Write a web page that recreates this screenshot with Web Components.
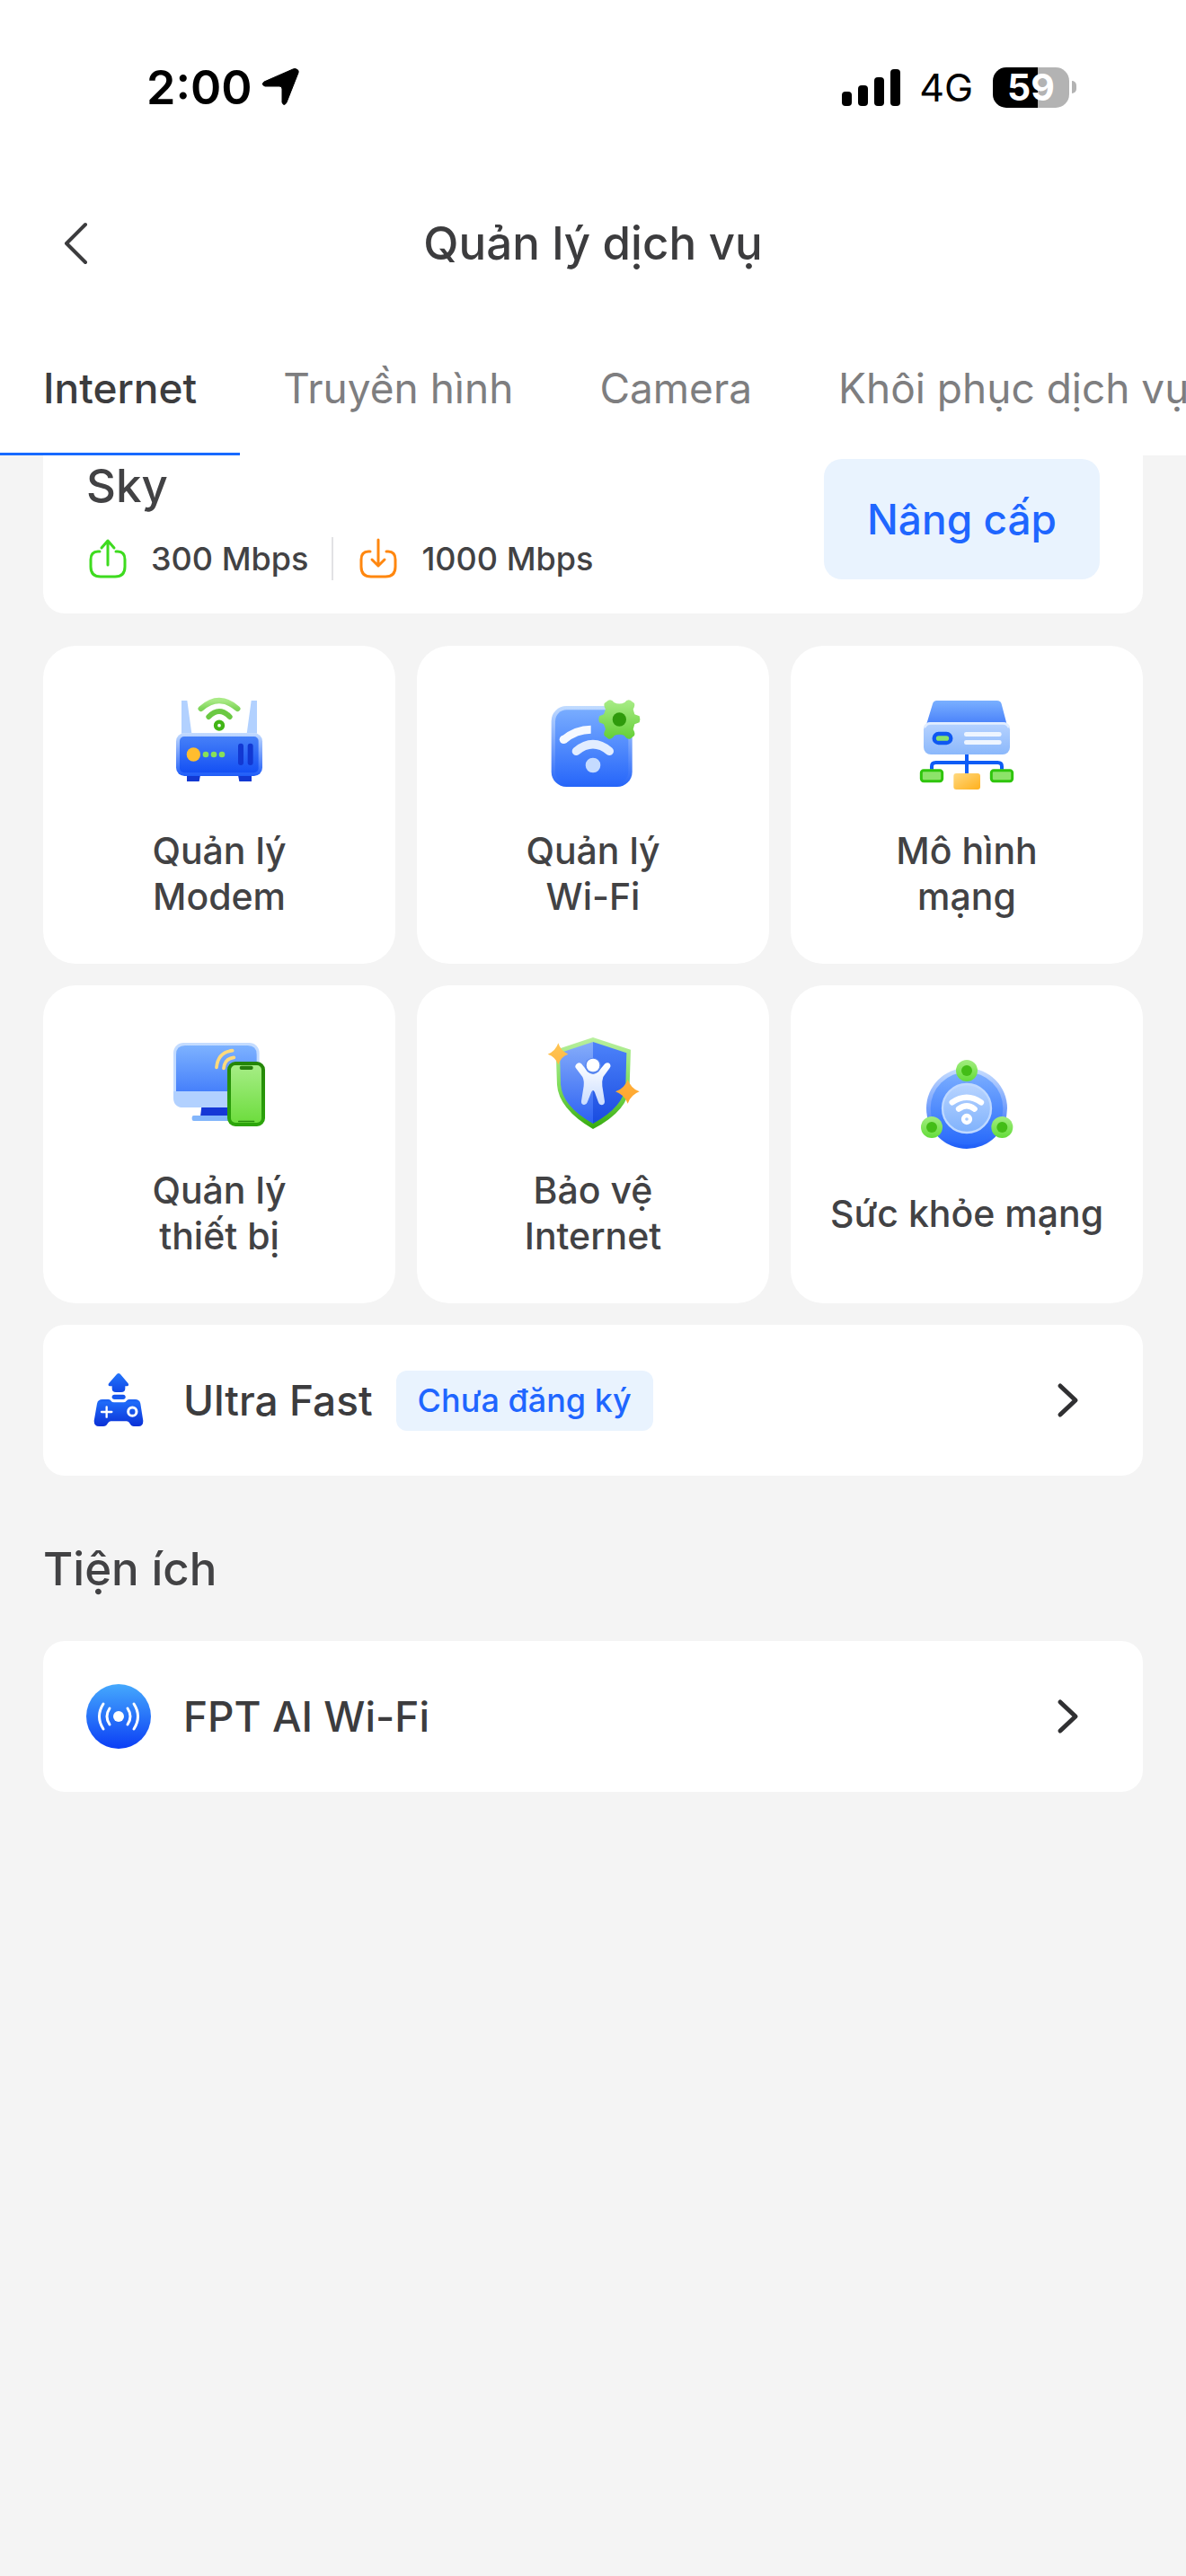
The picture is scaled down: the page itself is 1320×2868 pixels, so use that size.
<!DOCTYPE html>
<html lang="vi">
<head>
<meta charset="UTF-8">
<meta name="viewport" content="width=device-width, initial-scale=1">
<title>Quản lý dịch vụ</title>
<style>
  :root {
    --text: #424244;
    --muted: #7e7e80;
    --blue: #1f66ff;
    --blue-soft: #e9f3fe;
    --fs-title: 51px;
    --fs-body: 46px;
    --fs-tile: 41px;
    --fs-small: 36px;
  }

  body {
    margin: 0;
    min-height: 100vh;
    background: #f4f4f4;
    color: var(--text);
    font-family: Inter, "Noto Sans", sans-serif;
    font-weight: 500;
  }
</style>
</head>
<body>
<service-page></service-page>

<script>
/** Shared base: puts the markup into an open shadow root */
class BaseElement extends HTMLElement {
  constructor() {
    super();
    this.attachShadow({ mode: 'open' });
  }

  connectedCallback() {
    this.shadowRoot.innerHTML = this.render();
  }
}

const ICONS = {
  modem: {
    box: '72 69 360 360',
    art: `
      <defs>
        <linearGradient id="body" x1="0" y1="0" x2="0" y2="1"><stop offset="0" stop-color="#4680f8"/><stop offset="1" stop-color="#1450f4"/></linearGradient>
        <linearGradient id="rim" x1="0" y1="0" x2="0" y2="1"><stop offset="0" stop-color="#c4dcff"/><stop offset="1" stop-color="#1e5cf8"/></linearGradient>
        <linearGradient id="wave" x1="0" y1="0" x2="0" y2="1"><stop offset="0" stop-color="#a9ea86"/><stop offset="1" stop-color="#7ed458"/></linearGradient>
      </defs>
      <path d="M126 117h19l15 110h-34zM359 117h19v110h-34z" fill="#b2d1ff"/>
      <path d="M144 366h45l-4 21h-41zM315 366h45v21h-41z" fill="#1238d2"/>
      <rect x="108" y="225" width="288" height="144" rx="28" fill="url(#rim)"/>
      <rect x="120" y="237" width="263" height="121" rx="15" fill="url(#body)"/>
      <path d="M191 144q61-54 122 0" fill="none" stroke="url(#wave)" stroke-width="19" stroke-linecap="round"/>
      <path d="M217 171q35-36 70 0" fill="none" stroke="#6bc943" stroke-width="18" stroke-linecap="round"/>
      <circle cx="252" cy="200" r="12" fill="#fff" stroke="#42b516" stroke-width="13"/>
      <circle cx="166" cy="297" r="23" fill="#ffbd2e"/>
      <g fill="#88e05a"><circle cx="207" cy="297" r="10"/><circle cx="234" cy="297" r="10"/><circle cx="261" cy="297" r="10"/></g>
      <rect x="315" y="260" width="18" height="73" rx="9" fill="#1238d2"/>
      <rect x="347" y="260" width="18" height="73" rx="9" fill="#1238d2"/>`
  },
  wifi: {
    box: '60 39 360 360',
    art: `
      <defs>
        <linearGradient id="rim" x1="0" y1="0" x2="0" y2="1"><stop offset="0" stop-color="#c2dcff"/><stop offset="1" stop-color="#2464f8"/></linearGradient>
        <linearGradient id="body" x1="0" y1="0" x2="0" y2="1"><stop offset="0" stop-color="#78acff"/><stop offset="1" stop-color="#2a69fa"/></linearGradient>
        <linearGradient id="gear" x1="0" y1="0" x2="0" y2="1"><stop offset="0" stop-color="#a9ec88"/><stop offset="1" stop-color="#63cf35"/></linearGradient>
      </defs>
      <rect x="101" y="105" width="270" height="270" rx="50" fill="url(#rim)"/>
      <rect x="114" y="118" width="244" height="244" rx="38" fill="url(#body)"/>
      <path d="M142 218q42-34 91-34" fill="none" stroke="#f6f9ff" stroke-width="27"/>
      <circle cx="142" cy="217" r="14" fill="#f6f9ff"/>
      <path d="M184 256q56-46 111 0" fill="none" stroke="#e2edff" stroke-width="28" stroke-linecap="round"/>
      <circle cx="240" cy="303" r="25" fill="#c5dbff"/>
      <path d="M291 86q12-4 19 7 18 9 36 0 7-11 19-7l13 10q3 8-4 20l5 17 16 6q4 10 0 21l-16 6-5 17q8 13 4 21l-14 11q-11 2-19-11-17-7-34 0-8 13-19 11l-14-11q-4-8 4-21l-6-17-15-6q-4-11 0-21l15-6 6-17q-7-12-4-20z" fill="url(#gear)"/>
      <circle cx="328" cy="150" r="23" fill="#2f9a0c"/>`
  },
  network: {
    box: '78 39 360 360',
    art: `
      <defs>
        <linearGradient id="top" x1="0" y1="0" x2="0" y2="1"><stop offset="0" stop-color="#7ab0ff"/><stop offset="1" stop-color="#4880fa"/></linearGradient>
        <linearGradient id="front" x1="0" y1="0" x2="0" y2="1"><stop offset="0" stop-color="#b7d3ff"/><stop offset="1" stop-color="#8bb8fb"/></linearGradient>
        <linearGradient id="node" x1="0" y1="0" x2="1" y2="1"><stop offset="0" stop-color="#ffd980"/><stop offset="1" stop-color="#ffb01c"/></linearGradient>
      </defs>
      <path d="M141 317v-10q0-13 14-13h206q14 0 14 13v10M258 262v70" fill="none" stroke="#0e5cf6" stroke-width="12"/>
      <path d="M158 87h201q12 0 15 11l18 69H123l21-69q3-11 14-11z" fill="url(#top)"/>
      <rect x="114" y="160" width="288" height="107" rx="24" fill="url(#front)"/>
      <path d="M117 177q5-14 20-14h242q15 0 20 14" fill="none" stroke="#e2eeff" stroke-width="8"/>
      <rect x="149" y="198" width="56" height="30" rx="15" fill="#88e36a" stroke="#0f58f2" stroke-width="13"/>
      <rect x="249" y="192" width="125" height="15" rx="7" fill="#eef5ff"/>
      <rect x="249" y="219" width="125" height="15" rx="7" fill="#eef5ff"/>
      <rect x="106" y="320" width="70" height="36" rx="8" fill="#8de36a" stroke="#2fc50d" stroke-width="9"/>
      <rect x="340" y="320" width="70" height="36" rx="8" fill="#8de36a" stroke="#2fc50d" stroke-width="9"/>
      <rect x="214" y="330" width="89" height="54" rx="9" fill="url(#node)"/>`
  },
  devices: {
    box: '42 33 360 360',
    art: `
      <defs>
        <linearGradient id="screen" x1="0" y1="0" x2="0" y2="1"><stop offset="0" stop-color="#7db2ff"/><stop offset="1" stop-color="#4680fb"/></linearGradient>
        <linearGradient id="phone" x1="0" y1="0" x2="0" y2="1"><stop offset="0" stop-color="#a8ee88"/><stop offset="1" stop-color="#6bdc3b"/></linearGradient>
        <linearGradient id="frame" x1="0" y1="0" x2="0" y2="1"><stop offset="0" stop-color="#248607"/><stop offset="1" stop-color="#2ca50b"/></linearGradient>
      </defs>
      <path d="M163 303h95v33H159z" fill="#1538d6"/>
      <rect x="131" y="333" width="140" height="18" rx="6" fill="#83b6fb"/>
      <rect x="69" y="90" width="287" height="216" rx="34" fill="#c4dcff"/>
      <path d="M69 252h287v20q0 34-34 34H103q-34 0-34-34z" fill="#b2d1ff"/>
      <path d="M78 252V129q0-30 30-30h209q30 0 30 30v123z" fill="url(#screen)"/>
      <path d="M213 172q5-51 53-56M237 175q3-32 34-36" fill="none" stroke="#ffda7d" stroke-width="11" stroke-linecap="round"/>
      <rect x="255" y="159" width="114" height="204" rx="21" fill="url(#phone)" stroke="url(#frame)" stroke-width="12"/>
      <rect x="290" y="167" width="45" height="13" rx="6" fill="#267d0c"/>
      <rect x="285" y="350" width="55" height="5" rx="2" fill="#278c0c"/>`
  },
  shield: {
    box: '30 33 360 360',
    art: `
      <defs>
        <linearGradient id="edge" x1="0" y1="0" x2="0" y2="1"><stop offset="0" stop-color="#baf0a0"/><stop offset=".55" stop-color="#7ddc58"/><stop offset="1" stop-color="#35aa0e"/></linearGradient>
        <linearGradient id="left" x1="0" y1="0" x2="0" y2="1"><stop offset="0" stop-color="#86adfa"/><stop offset="1" stop-color="#2c61f3"/></linearGradient>
        <linearGradient id="right" x1="0" y1="0" x2="0" y2="1"><stop offset="0" stop-color="#4d83fa"/><stop offset="1" stop-color="#194be0"/></linearGradient>
        <linearGradient id="man" x1="0" y1="0" x2="0" y2="1"><stop offset="0" stop-color="#ffffff"/><stop offset="1" stop-color="#c9dcff"/></linearGradient>
        <linearGradient id="star" x1="0" y1="0" x2="0" y2="1"><stop offset="0" stop-color="#ffc552"/><stop offset="1" stop-color="#ffa42d"/></linearGradient>
      </defs>
      <path d="M210 72l126 41-4 117q0 84-122 148Q95 310 90 230l-4-117z" fill="url(#edge)"/>
      <path d="M210 87L99 124l3 105q5 73 108 131z" fill="url(#left)"/>
      <path d="M210 87l112 37-3 105q-3 73-109 131z" fill="url(#right)"/>
      <path d="M154 162q8-9 17-2l22 27q17 14 34 0l23-27q9-7 17 1 4 7-1 13l-22 30q-5 14-3 31l8 51q0 10-9 12-9 0-12-9l-12-33q-6-14-12 0l-13 33q-3 9-12 8-9-2-8-12l8-50q2-19-4-31l-22-29q-5-6 1-13z" fill="url(#man)"/>
      <circle cx="210" cy="167" r="27" fill="#5a88f0"/>
      <circle cx="210" cy="165" r="22" fill="#fff"/>
      <path d="M94 91q8 26 33 37-25 9-33 35-9-26-35-35 26-10 35-37zM326 212q10 30 39 41-29 11-39 40-10-29-41-40 31-11 41-41z" fill="url(#star)"/>`
  },
  health: {
    box: '48 21 360 360',
    art: `
      <defs>
        <linearGradient id="rim" x1="0" y1="0" x2="0" y2="1"><stop offset="0" stop-color="#c9dfff"/><stop offset="1" stop-color="#1c5df8"/></linearGradient>
        <linearGradient id="ring" x1="0" y1="0" x2="0" y2="1"><stop offset="0" stop-color="#7baeff"/><stop offset="1" stop-color="#286afb"/></linearGradient>
        <linearGradient id="core" x1="0" y1="0" x2="0" y2="1"><stop offset="0" stop-color="#b8d4ff"/><stop offset="1" stop-color="#80b2fc"/></linearGradient>
        <linearGradient id="dot" x1="0" y1="0" x2="0" y2="1"><stop offset="0" stop-color="#a2ed80"/><stop offset="1" stop-color="#64dc3a"/></linearGradient>
      </defs>
      <circle cx="228" cy="219" r="135" fill="url(#rim)"/>
      <circle cx="228" cy="219" r="121" fill="url(#ring)"/>
      <circle cx="228" cy="219" r="81" fill="url(#core)" stroke="#bfd9ff" stroke-width="7"/>
      <path d="M179 199q49-33 97 0M201 221q27-20 53 0" fill="none" stroke="#fff" stroke-width="19" stroke-linecap="round"/>
      <circle cx="228" cy="255" r="12" fill="#a8cbff" stroke="#fff" stroke-width="13"/>
      <g fill="url(#dot)"><circle cx="228" cy="93" r="36"/><circle cx="111" cy="282" r="36"/><circle cx="346" cy="282" r="36"/></g>
      <g fill="#43bd17"><circle cx="228" cy="93" r="18"/><circle cx="111" cy="282" r="18"/><circle cx="346" cy="282" r="18"/></g>`
  },
  game: {
    box: '48 66 216 216',
    art: `
      <defs>
        <linearGradient id="fill" gradientUnits="userSpaceOnUse" x1="0" y1="84" x2="0" y2="262"><stop offset="0" stop-color="#2374fb"/><stop offset=".35" stop-color="#1049e6"/><stop offset=".55" stop-color="#1f6af8"/><stop offset="1" stop-color="#0a30d6"/></linearGradient>
      </defs>
      <path d="M150 87q6-6 12 0l26 31q4 8-4 9h-6v7q0 13-13 13h-18q-13 0-13-13v-7h-7q-8-1-4-9z" fill="url(#fill)"/>
      <rect x="134" y="155" width="45" height="16" rx="8" fill="url(#fill)"/>
      <path d="M102 171h20q7 0 9 5 3 5 10 5h31q7 0 10-5 3-5 9-5h20q15 0 18 14l9 58q0 18-16 18h-15q-9 0-13-9-4-8-11-8h-53q-7 0-11 8-4 9-14 9H91q-17 0-17-18l10-58q3-14 18-14z" fill="url(#fill)"/>
      <path d="M116 196v34M99 213h34" stroke="#fff" stroke-width="7" stroke-linecap="round"/>
      <circle cx="202" cy="212" r="14" fill="none" stroke="#fff" stroke-width="9"/>`
  },
  ai: {
    box: '0 0 72 72',
    art: `
      <defs>
        <linearGradient id="disc" x1="0" y1="0" x2="0" y2="1"><stop offset="0" stop-color="#45a9fd"/><stop offset="1" stop-color="#0b3ef5"/></linearGradient>
      </defs>
      <circle cx="36" cy="36" r="36" fill="url(#disc)"/>
      <circle cx="36" cy="36" r="6" fill="#fff"/>
      <path d="M26 27q-6 9 0 18M46 27q6 9 0 18M19 22q-9 14 0 28M53 22q9 14 0 28" fill="none" stroke="#fff" stroke-width="3" stroke-linecap="round"/>`
  },
  upload: {
    box: '0 0 48 48',
    art: `<path d="M15 16H13Q5 16 5 25V33Q5 44 16 44H32Q43 44 43 33V25Q43 16 35 16H33M24 31V5M17 12L24 4L31 12" fill="none" stroke="#3edb1f" stroke-width="3" stroke-linecap="round" stroke-linejoin="round"/>`
  },
  download: {
    box: '0 0 48 48',
    art: `<path d="M15 16H13Q5 16 5 25V33Q5 44 16 44H32Q43 44 43 33V25Q43 16 35 16H33M24 3V31M17 25L24 32L31 25" fill="none" stroke="#ff870f" stroke-width="3" stroke-linecap="round" stroke-linejoin="round"/>`
  },
  back: {
    box: '0 0 48 48',
    art: `<path d="M35 3L14 24L35 45" fill="none" stroke="#3c3c3e" stroke-width="4" stroke-linecap="round" stroke-linejoin="round"/>`
  },
  next: {
    box: '0 0 48 48',
    art: `<path d="M16 8L33 24L16 40" fill="none" stroke="#303032" stroke-width="5" stroke-linecap="round" stroke-linejoin="round"/>`
  },
  location: {
    box: '0 0 44 44',
    art: `<path d="M41 2q3 1 2 4L30 39q-3 5-5 0V24q0-3-3-3H6q-5-2-1-5L37 2q2-1 4 0z" fill="#000" stroke="#000" stroke-width="1"/>`
  }
};

class SvcIcon extends BaseElement {
  render() {
    const icon = ICONS[this.getAttribute('name')];
    return `
      <style>
        :host { display: block; flex: none; width: 48px; height: 48px; }
        svg { display: block; width: 100%; height: 100%; }
      </style>
      <svg viewBox="${icon.box}" aria-hidden="true">${icon.art}</svg>
    `;
  }
}

class StatusBar extends BaseElement {
  render() {
    return `
      <style>
        :host {
          display: flex;
          justify-content: space-between;
          align-items: center;
          height: 66px;
          padding: 64px 122px 0 163px;
          color: #000;
        }
        .side { display: flex; align-items: center; }
        .time { font-size: 52px; font-weight: 600; }
        .side svc-icon { width: 44px; height: 44px; margin-left: 8px; }
        .signal { width: 66px; height: 42px; }
        .net { margin: 0 22px 0 20px; font-size: 43px; font-weight: 400; }
        .battery {
          width: 85px;
          border-radius: 15px;
          background: linear-gradient(90deg, #000 59%, #b3b3b3 59%);
          color: #fff;
          font-size: var(--fs-tile);
          font-weight: 700;
          line-height: 45px;
          text-align: center;
        }
        .nub { width: 5px; height: 14px; margin-left: 3px; border-radius: 0 7px 7px 0; background: #b3b3b3; }
      </style>
      <div class="side">
        <span class="time">2:00</span>
        <svc-icon name="location"></svc-icon>
      </div>
      <div class="side">
        <svg class="signal" viewBox="0 0 66 42" aria-hidden="true">
          <rect x="0" y="26" width="11" height="16" rx="4"/>
          <rect x="18" y="19" width="11" height="23" rx="4"/>
          <rect x="36" y="10" width="11" height="32" rx="4"/>
          <rect x="54" y="1" width="11" height="41" rx="4"/>
        </svg>
        <span class="net">4G</span>
        <span class="battery">59</span>
        <span class="nub"></span>
      </div>
    `;
  }
}

class NavBar extends BaseElement {
  render() {
    return `
      <style>
        :host {
          display: grid;
          grid-template-columns: 96px 1fr 96px;
          align-items: center;
          height: 96px;
          margin-top: 93px;
          padding: 0 36px;
        }
        button { padding: 24px; border: none; background: none; cursor: pointer; }
        h1 {
          margin: 0;
          color: #3c3c3e;
          font-size: var(--fs-title);
          font-weight: 500;
          line-height: 64px;
          text-align: center;
        }
      </style>
      <button type="button" aria-label="Quay lại"><svc-icon name="back"></svc-icon></button>
      <h1><slot></slot></h1>
    `;
  }
}

class TabBar extends BaseElement {
  render() {
    const tabs = this.getAttribute('tabs').split('|');
    return `
      <style>
        :host { display: block; margin-top: 49px; overflow: hidden; }
        div { display: flex; }
        button {
          flex: none;
          padding: 36px 48px 44px;
          border: none;
          border-bottom: 3px solid transparent;
          background: none;
          color: var(--muted);
          font: 400 var(--fs-body)/56px Inter, "Noto Sans", sans-serif;
          white-space: nowrap;
          cursor: pointer;
        }
        button[aria-selected="true"] {
          border-bottom-color: #176aff;
          color: #3c3c3e;
          font-weight: 500;
        }
      </style>
      <div role="tablist">
        ${tabs.map((tab, i) => `<button type="button" role="tab" aria-selected="${i === 0}">${tab}</button>`).join('')}
      </div>
    `;
  }
}

class PlanCard extends BaseElement {
  render() {
    return `
      <style>
        :host {
          display: flex;
          justify-content: space-between;
          align-items: flex-start;
          padding: 4px 48px 37px;
          border-radius: 0 0 24px 24px;
          background: #fff;
        }
        h2 { margin: 0 0 27px; font-size: var(--fs-title); font-weight: 500; line-height: 60px; }
        .speeds { display: flex; align-items: center; font-size: var(--fs-small); line-height: 48px; }
        .speeds span { margin-left: 24px; }
        .line { width: 2px; height: 48px; margin: 0 26px; background: #e2e2e4; }
        button {
          padding: 38px 48px;
          border: none;
          border-radius: 20px;
          background: var(--blue-soft);
          color: var(--blue);
          font: 500 var(--fs-body)/58px Inter, "Noto Sans", sans-serif;
          cursor: pointer;
        }
      </style>
      <div>
        <h2><slot></slot></h2>
        <div class="speeds">
          <svc-icon name="upload"></svc-icon><span>${this.getAttribute('up')}</span>
          <div class="line"></div>
          <svc-icon name="download"></svc-icon><span>${this.getAttribute('down')}</span>
        </div>
      </div>
      <button type="button">Nâng cấp</button>
    `;
  }
}

class ServiceTile extends BaseElement {
  render() {
    return `
      <style>
        :host { display: block; }
        button {
          display: flex;
          flex-direction: column;
          align-items: center;
          justify-content: center;
          gap: 38px;
          width: 100%;
          height: 354px;
          padding: 0 0 4px;
          border: none;
          border-radius: 36px;
          background: #fff;
          color: var(--text);
          font: 500 var(--fs-tile)/51px Inter, "Noto Sans", sans-serif;
          cursor: pointer;
        }
        svc-icon { width: 120px; height: 120px; }
      </style>
      <button type="button">
        <svc-icon name="${this.getAttribute('icon')}"></svc-icon>
        <span><slot></slot></span>
      </button>
    `;
  }
}

class MenuRow extends BaseElement {
  render() {
    const badge = this.getAttribute('badge');
    return `
      <style>
        :host { display: block; }
        a {
          display: flex;
          align-items: center;
          height: 168px;
          padding: 0 60px 0 48px;
          border-radius: 24px;
          background: #fff;
          color: #3c3c3e;
          font-size: var(--fs-body);
          text-decoration: none;
        }
        svc-icon { width: 72px; height: 72px; margin-right: 36px; }
        .next { width: 48px; height: 48px; margin: 0 0 0 auto; }
        .badge {
          margin-left: 26px;
          padding: 0 24px;
          border-radius: 12px;
          background: var(--blue-soft);
          color: var(--blue);
          font-size: var(--fs-small);
          line-height: 67px;
        }
      </style>
      <a href="#">
        <svc-icon name="${this.getAttribute('icon')}"></svc-icon>
        <slot></slot>
        ${badge ? `<span class="badge">${badge}</span>` : ''}
        <svc-icon class="next" name="next"></svc-icon>
      </a>
    `;
  }
}

class ServicePage extends BaseElement {
  render() {
    return `
      <style>
        :host { display: block; }
        header { background: #fff; overflow: hidden; }
        main { padding: 0 48px; }
        .grid {
          display: grid;
          grid-template-columns: repeat(3, 1fr);
          gap: 24px;
          margin: 36px 0 24px;
        }
        h2 { margin: 72px 0 48px; font-size: var(--fs-title); font-weight: 500; line-height: 64px; }
      </style>
      <header>
        <status-bar></status-bar>
        <nav-bar>Quản lý dịch vụ</nav-bar>
        <tab-bar tabs="Internet|Truyền hình|Camera|Khôi phục dịch vụ"></tab-bar>
      </header>
      <main>
        <plan-card up="300 Mbps" down="1000 Mbps">Sky</plan-card>
        <div class="grid">
          <service-tile icon="modem">Quản lý<br>Modem</service-tile>
          <service-tile icon="wifi">Quản lý<br>Wi-Fi</service-tile>
          <service-tile icon="network">Mô hình<br>mạng</service-tile>
          <service-tile icon="devices">Quản lý<br>thiết bị</service-tile>
          <service-tile icon="shield">Bảo vệ<br>Internet</service-tile>
          <service-tile icon="health">Sức khỏe mạng</service-tile>
        </div>
        <menu-row icon="game" badge="Chưa đăng ký">Ultra Fast</menu-row>
        <h2>Tiện ích</h2>
        <menu-row icon="ai">FPT AI Wi-Fi</menu-row>
      </main>
    `;
  }
}

customElements.define('svc-icon', SvcIcon);
customElements.define('status-bar', StatusBar);
customElements.define('nav-bar', NavBar);
customElements.define('tab-bar', TabBar);
customElements.define('plan-card', PlanCard);
customElements.define('service-tile', ServiceTile);
customElements.define('menu-row', MenuRow);
customElements.define('service-page', ServicePage);
</script>
</body>
</html>
